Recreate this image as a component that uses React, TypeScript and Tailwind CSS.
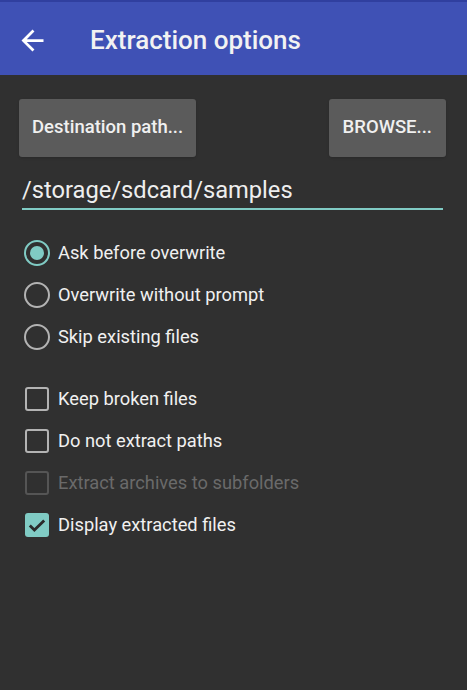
import { MdArrowBack } from "react-icons/md";

const radios = [
  { label: "Ask before overwrite", checked: true },
  { label: "Overwrite without prompt", checked: false },
  { label: "Skip existing files", checked: false },
];

const checks = [
  { label: "Keep broken files", checked: false, disabled: false },
  { label: "Do not extract paths", checked: false, disabled: false },
  { label: "Extract archives to subfolders", checked: false, disabled: true },
  { label: "Display extracted files", checked: true, disabled: false },
];

function Radio({ checked }: { checked: boolean }) {
  return (
    <span
      className={
        "flex h-[26px] w-[26px] shrink-0 items-center justify-center rounded-full border-[2.5px] " +
        (checked ? "border-[#80cbc4]" : "border-[#b3b3b3]")
      }
    >
      {checked && <span className="h-[14px] w-[14px] rounded-full bg-[#80cbc4]" />}
    </span>
  );
}

function Checkbox({ checked, disabled }: { checked: boolean; disabled: boolean }) {
  if (checked) {
    return (
      <span className="flex h-[24px] w-[24px] shrink-0 items-center justify-center rounded-[3px] bg-[#80cbc4]">
        <svg viewBox="0 0 24 24" className="h-[24px] w-[24px]" fill="none">
          <path d="M4.8 12.4l4.6 4.6L19.2 7.4" stroke="#2a2a2a" strokeWidth="2.8" />
        </svg>
      </span>
    );
  }
  return (
    <span
      className={
        "block h-[24px] w-[24px] shrink-0 rounded-[3px] border-[2.5px] " +
        (disabled ? "border-[#555555]" : "border-[#b3b3b3]")
      }
    />
  );
}

export default function App() {
  return (
    <div className="flex h-[690px] w-[467px] flex-col bg-[#303030] font-['Roboto',sans-serif]">
      {/* Toolbar */}
      <header className="flex h-[75px] items-center border-t-2 border-[#303f9f] bg-[#3f51b5] pt-[3px]">
        <MdArrowBack className="ml-[16px] h-[33px] w-[33px] text-white" />
        <h1 className="ml-[41px] text-[26px] font-medium text-[#f2f2f2]">Extraction options</h1>
      </header>

      <div className="flex flex-col pl-[19px] pr-[21px] pt-[24px]">
        {/* Path buttons */}
        <div className="flex justify-between">
          <button className="h-[58px] rounded-[3px] bg-[#5b5b5b] px-[13px] text-[18.5px] font-medium text-[#f0f0f0] shadow-sm">
            Destination path...
          </button>
          <button className="h-[58px] rounded-[3px] bg-[#5b5b5b] px-[14px] text-[18.5px] font-medium text-[#f0f0f0] shadow-sm">
            BROWSE...
          </button>
        </div>

        {/* Path input */}
        <div className="ml-[3px] mr-[3px] mt-[17px] border-b-2 border-[#80cbc4] pb-[2px]">
          <div className="text-[23.7px] leading-[32px] text-[#eeeeee]">/storage/sdcard/samples</div>
        </div>

        {/* Overwrite mode */}
        <div className="mt-[22px] flex flex-col">
          {radios.map((r) => (
            <div key={r.label} className="flex h-[42px] items-center">
              <span className="ml-[5px]">
                <Radio checked={r.checked} />
              </span>
              <span className="ml-[8px] text-[18.3px] text-[#f0f0f0]">{r.label}</span>
            </div>
          ))}
        </div>

        {/* Flags */}
        <div className="mt-[20px] flex flex-col">
          {checks.map((c) => (
            <div key={c.label} className="flex h-[42px] items-center">
              <span className="ml-[6px]">
                <Checkbox checked={c.checked} disabled={c.disabled} />
              </span>
              <span
                className={
                  "ml-[9px] text-[18.3px] " + (c.disabled ? "text-[#6a6a6a]" : "text-[#f0f0f0]")
                }
              >
                {c.label}
              </span>
            </div>
          ))}
        </div>
      </div>
    </div>
  );
}
